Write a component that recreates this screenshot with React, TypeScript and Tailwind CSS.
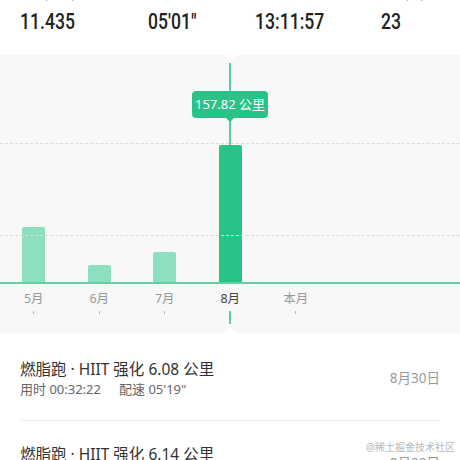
const stats = [
  { label: '距离(公里)', value: '11.435' },
  { label: '平均配速', value: "05'01\"" },
  { label: '时长', value: '13:11:57' },
  { label: '次数(次)', value: '23' },
];

const months = [
  { name: '5月', h: 55 },
  { name: '6月', h: 17 },
  { name: '7月', h: 30 },
  { name: '8月', h: 137, active: true },
  { name: '本月', h: 0 },
];

const runs = [
  { title: '燃脂跑 · HIIT 强化 6.08 公里', time: '00:32:22', pace: "05'19\"", date: '8月30日' },
  { title: '燃脂跑 · HIIT 强化 6.14 公里', time: '00:33:05', pace: "05'23\"", date: '8月29日' },
];

const cjk = { fontFamily: '"Noto Sans", "Noto Sans CJK SC", sans-serif' };

function Chart() {
  return (
    <div className="relative h-[278px] bg-[#f8f8f9]">
      {/* notches */}
      <div className="absolute left-[223px] top-0 h-0 w-0 border-l-[7px] border-r-[7px] border-t-[6px] border-l-transparent border-r-transparent border-t-white" />
      <div className="absolute bottom-0 left-[223px] h-0 w-0 border-b-[6px] border-l-[7px] border-r-[7px] border-b-white border-l-transparent border-r-transparent" />

      {/* grid lines */}
      <div className="absolute left-0 right-0 top-[88px] border-t border-dashed border-[#dcdcdc]" />
      <div className="absolute left-0 right-0 top-[180px] border-t border-dashed border-[#dcdcdc]" />

      {/* cursor line */}
      <div className="absolute left-[229px] top-[8px] h-[82px] w-[2px] bg-[#5ccda1]" />

      {/* tooltip */}
      <div className="absolute left-[192px] top-[36px] flex h-[27px] w-[76px] items-center justify-center rounded-[4px] bg-[#2bc287] text-[13px] text-white" style={cjk}>
        157.82 公里
        <div className="absolute -bottom-[4px] left-[34px] h-0 w-0 border-l-[4px] border-r-[4px] border-t-[4px] border-l-transparent border-r-transparent border-t-[#2bc287]" />
      </div>

      <div className="flex h-[227px] items-end pl-[1px]">
        {months.map((m) => (
          <div key={m.name} className="flex w-[65.5px] justify-center">
            {m.h > 0 && (
              <div
                className={m.active ? 'w-[23px] rounded-t-[2px] bg-[#27c486]' : 'w-[23px] rounded-t-[2px] bg-[#8ddfbf]'}
                style={{ height: m.h }}
              />
            )}
          </div>
        ))}
      </div>
      <div className="h-[2px] bg-[#62cfa5]" />

      <div className="flex pl-[1px] pt-[7px]">
        {months.map((m) => (
          <div key={m.name} className="flex w-[65.5px] flex-col items-center">
            <span className={m.active ? 'text-[12.5px] leading-[16px] text-[#444]' : 'text-[12.5px] leading-[16px] text-[#999]'} style={cjk}>
              {m.name}
            </span>
            {m.active ? (
              <div className="mt-[4px] h-[13px] w-[2px] bg-[#5ccda1]" />
            ) : (
              <div className="mt-[4px] h-[3px] w-[1px] bg-[#b5b5b5]" />
            )}
          </div>
        ))}
      </div>
    </div>
  );
}

export default function App() {
  return (
    <div className="relative h-[460px] w-[460px] overflow-hidden bg-white">
      <div className="grid h-[55px] grid-cols-[128px_107px_126px_1fr] pl-5">
        {stats.map((s) => (
          <div key={s.label} className="flex flex-col">
            <div className="-mt-[13px] text-[12px] leading-[16px] text-[#aaa]" style={cjk}>
              {s.label}
            </div>
            <div
              className="mt-[8px] origin-left scale-x-[0.8] whitespace-nowrap text-[22px] font-medium leading-[22px] text-[#222]"
              style={{ fontFamily: 'Roboto, sans-serif' }}
            >
              {s.value}
            </div>
          </div>
        ))}
      </div>

      <Chart />

      <div>
        {runs.map((r, i) => (
          <div key={r.date}>
            {i > 0 && <div className="mx-5 h-px bg-[#eeeeee]" />}
            <div className={i === 0 ? 'flex items-center justify-between px-5 pb-[22px] pt-[25px]' : 'flex items-center justify-between px-5 pb-[22px] pt-[22px]'}>
              <div className="flex flex-col" style={cjk}>
                <div className="text-[15.5px] leading-[22px] text-[#333]">{r.title}</div>
                <div className="text-[13px] leading-[18px] text-[#666]">
                  <span>用时 {r.time}</span>
                  <span className="ml-[18px]">配速 {r.pace}</span>
                </div>
              </div>
              <div className="text-[13.5px] text-[#999]" style={cjk}>
                {r.date}
              </div>
            </div>
          </div>
        ))}
      </div>

      <div className="absolute bottom-[7px] right-[5px] text-[10px] leading-[12px] text-[#b8b8b8]" style={cjk}>
        @稀土掘金技术社区
      </div>
    </div>
  );
}
